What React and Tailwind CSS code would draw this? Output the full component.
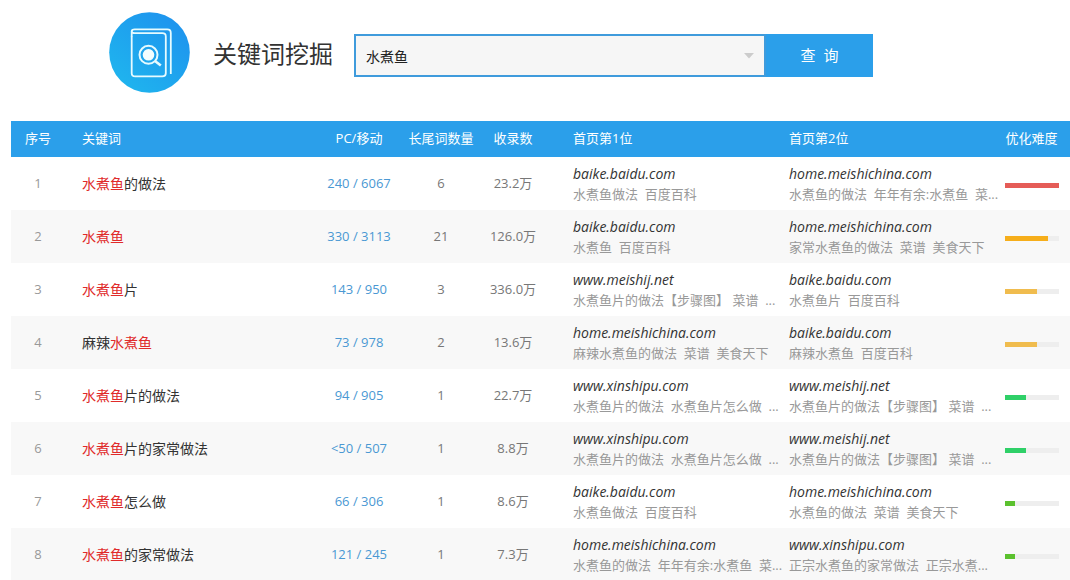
const ROWS = [
  { term: [["水煮鱼", true], ["的做法", false]], volume: "240 / 6067", tail: "6", indexed: "23.2万", first: ["baike.baidu.com", "水煮鱼做法  百度百科"], second: ["home.meishichina.com", "水煮鱼的做法  年年有余:水煮鱼  菜..."], level: 100, color: "bg-[#e55c57]" },
  { term: [["水煮鱼", true]], volume: "330 / 3113", tail: "21", indexed: "126.0万", first: ["baike.baidu.com", "水煮鱼  百度百科"], second: ["home.meishichina.com", "家常水煮鱼的做法  菜谱  美食天下"], level: 80, color: "bg-[#f6ae1b]" },
  { term: [["水煮鱼", true], ["片", false]], volume: "143 / 950", tail: "3", indexed: "336.0万", first: ["www.meishij.net", "水煮鱼片的做法【步骤图】 菜谱  ..."], second: ["baike.baidu.com", "水煮鱼片  百度百科"], level: 60, color: "bg-[#f0bc4e]" },
  { term: [["麻辣", false], ["水煮鱼", true]], volume: "73 / 978", tail: "2", indexed: "13.6万", first: ["home.meishichina.com", "麻辣水煮鱼的做法  菜谱  美食天下"], second: ["baike.baidu.com", "麻辣水煮鱼  百度百科"], level: 60, color: "bg-[#f0bc4e]" },
  { term: [["水煮鱼", true], ["片的做法", false]], volume: "94 / 905", tail: "1", indexed: "22.7万", first: ["www.xinshipu.com", "水煮鱼片的做法  水煮鱼片怎么做  ..."], second: ["www.meishij.net", "水煮鱼片的做法【步骤图】 菜谱  ..."], level: 40, color: "bg-[#2fd068]" },
  { term: [["水煮鱼", true], ["片的家常做法", false]], volume: "<50 / 507", tail: "1", indexed: "8.8万", first: ["www.xinshipu.com", "水煮鱼片的做法  水煮鱼片怎么做  ..."], second: ["www.meishij.net", "水煮鱼片的做法【步骤图】 菜谱  ..."], level: 40, color: "bg-[#2fd068]" },
  { term: [["水煮鱼", true], ["怎么做", false]], volume: "66 / 306", tail: "1", indexed: "8.6万", first: ["baike.baidu.com", "水煮鱼做法  百度百科"], second: ["home.meishichina.com", "水煮鱼的做法  菜谱  美食天下"], level: 20, color: "bg-[#5bc12e]" },
  { term: [["水煮鱼", true], ["的家常做法", false]], volume: "121 / 245", tail: "1", indexed: "7.3万", first: ["home.meishichina.com", "水煮鱼的做法  年年有余:水煮鱼  菜..."], second: ["www.xinshipu.com", "正宗水煮鱼的家常做法  正宗水煮..."], level: 20, color: "bg-[#5bc12e]" },
];

function Logo() {
  return (
    <svg viewBox="0 0 82 82" className="size-[82px] shrink-0" fill="none" aria-hidden="true">
      <defs>
        <linearGradient id="disc" x1="0.1" y1="0.9" x2="0.8" y2="0.1">
          <stop offset="0" stopColor="#1fb5ee" />
          <stop offset="1" stopColor="#1e95ee" />
        </linearGradient>
      </defs>
      <circle cx="40.5" cy="40.5" r="40.3" fill="url(#disc)" />
      <g stroke="#e6fbff" strokeWidth="1.8">
        <path d="M22.7 24.5V61.2Q22.7 64.4 26.2 64.4H53.3Q56.8 64.4 56.8 61.2V24.5Q56.8 21.2 53.3 21.2H25.8Q22.7 21.2 22.7 19.2Q22.7 17.4 25.8 17.4H58.3Q61.8 17.4 61.8 20.9V62" />
        <path d="M22.7 19.5V25" />
        <circle cx="39.5" cy="42.8" r="9" strokeWidth="2" />
        <path d="M46 49L51.8 53.6" strokeWidth="2.6" />
      </g>
      <circle cx="39.5" cy="42.8" r="5.8" fill="#f2feff" />
    </svg>
  );
}

function Site({ site }) {
  return (
    <td className="pl-7 align-middle whitespace-pre">
      <a href="#" className="block text-sm leading-5 text-[#333] italic">{site[0]}</a>
      <p className="text-[13px] leading-5 text-[#999]">{site[1]}</p>
    </td>
  );
}

export default function App() {
  return (
    <div className="min-h-screen overflow-hidden bg-white pl-[11px] font-['Open_Sans','Noto_Sans_CJK_SC',sans-serif] font-normal">
      <header className="flex h-[121px] items-start pt-3 pl-[98px]">
        <Logo />
        <h1 className="ml-[22px] w-[122px] pt-6 text-2xl leading-9 font-normal whitespace-nowrap text-[#333]">关键词挖掘</h1>
        <form className="mt-[22px] ml-[19px] flex h-[43px]" onSubmit={(e) => e.preventDefault()}>
          <div className="relative">
            <input aria-label="关键词" defaultValue="水煮鱼" className="h-full w-[412px] border-2 border-[#3f9bdc] bg-[#f6f6f6] pr-8 pl-[10px] text-sm text-[#222] outline-none" />
            <svg viewBox="0 0 10 6" className="absolute top-[19px] right-[12px] h-[6px] w-[10px]" aria-hidden="true">
              <path d="M0 0H10L5 5.5Z" fill="#ccc" />
            </svg>
          </div>
          <button type="submit" className="w-[107px] bg-[#2b9fea] text-[15px] whitespace-pre text-white">查  询</button>
        </form>
      </header>
      <table className="w-full table-fixed border-collapse">
        <colgroup>
          <col className="w-[54px]" />
          <col />
          <col className="w-[84px]" />
          <col className="w-[80px]" />
          <col className="w-[64px]" />
          <col className="w-[216px]" />
          <col className="w-[232px]" />
          <col className="w-[77px]" />
        </colgroup>
        <thead>
          <tr className="h-9 bg-[#2b9fea] text-[13px] whitespace-nowrap text-white *:font-normal">
            <th scope="col">序号</th>
            <th scope="col" className="pl-[17px] text-left">关键词</th>
            <th scope="col">PC/移动</th>
            <th scope="col">长尾词数量</th>
            <th scope="col">收录数</th>
            <th scope="col" className="pl-7 text-left">首页第1位</th>
            <th scope="col" className="pl-7 text-left">首页第2位</th>
            <th scope="col">优化难度</th>
          </tr>
        </thead>
        <tbody>
          {ROWS.map((row, i) => (
            <tr key={i} className="h-[53px] text-[13px] text-[#777] even:bg-[#f8f8f8]">
              <td className="text-center text-[#999]">{i + 1}</td>
              <td className="pl-[17px] text-sm whitespace-nowrap">
                {row.term.map(([text, hit]) => (
                  <span key={text} className={hit ? "text-[#e02b2b]" : "text-[#333]"}>{text}</span>
                ))}
              </td>
              <td className="text-center whitespace-nowrap text-[#4a98d3]">{row.volume}</td>
              <td className="text-center">{row.tail}</td>
              <td className="text-center whitespace-nowrap">{row.indexed}</td>
              <Site site={row.first} />
              <Site site={row.second} />
              <td>
                <div className="mx-auto mt-[3px] h-[5px] w-[54px] bg-[#eee]">
                  <div className={`h-full ${row.color}`} style={{ width: `${row.level}%` }} />
                </div>
              </td>
            </tr>
          ))}
        </tbody>
      </table>
    </div>
  );
}
